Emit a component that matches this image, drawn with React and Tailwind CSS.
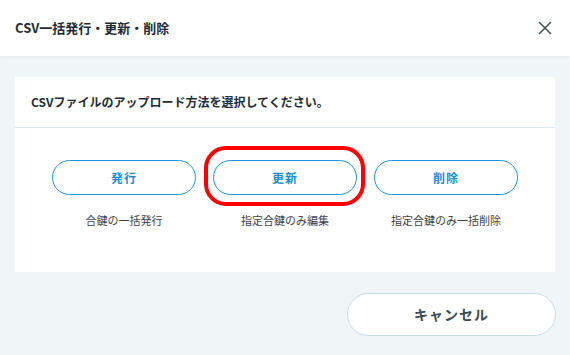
const font = { fontFamily: '"Noto Sans CJK JP", "Noto Sans", sans-serif' }

const options = [
    { label: '発行', note: '合鍵の一括発行' },
    { label: '更新', note: '指定合鍵のみ編集', active: true },
    { label: '削除', note: '指定合鍵のみ一括削除' },
]

export default function App() {
    return (
        <div className="w-[570px] h-[355px] bg-[#f0f5f8] flex flex-col overflow-hidden" style={font}>
            <div className="h-[56px] bg-white flex items-center justify-between pl-[15px] pr-[18px] shadow-[0_1px_4px_rgba(0,0,0,0.06)] shrink-0">
                <h1 className="text-[13px] font-bold text-[#1e2d35]">CSV一括発行・更新・削除</h1>
                <svg width="14" height="14" viewBox="0 0 14 14" className="text-[#3d4f58]">
                    <path d="M1.5 1.5 L12.5 12.5 M12.5 1.5 L1.5 12.5" stroke="currentColor" strokeWidth="1.5" strokeLinecap="round" />
                </svg>
            </div>
            <div className="flex-1 px-[15px] pt-[21px]">
                <div className="bg-white">
                    <div className="h-[51px] flex items-center pl-[16px] border-b border-[#dde8ee]">
                        <p className="text-[12px] font-bold text-[#1e2d35]">CSVファイルのアップロード方法を選択してください。</p>
                    </div>
                    <div className="h-[144px] flex justify-center gap-[17px] pt-[32px]">
                        {options.map(opt => (
                            <div key={opt.label} className="w-[144px] flex flex-col items-center">
                                <div className="relative w-full">
                                    {opt.active && (
                                        <div className="absolute -left-[9px] -right-[8px] -top-[14px] -bottom-[11px] border-[4px] border-[#ff0000] rounded-[22px]" />
                                    )}
                                    <button className="w-full h-[35px] rounded-full border border-[#1b93d9] text-[#1b8ed3] text-[12px] font-bold tracking-[1px] bg-white">
                                        {opt.label}
                                    </button>
                                </div>
                                <p className="mt-[17px] text-[11px] text-[#3b4447]">{opt.note}</p>
                            </div>
                        ))}
                    </div>
                </div>
                <div className="flex justify-end pt-[21px]">
                    <button className="w-[209px] h-[43px] rounded-full border border-[#c8dce6] bg-white text-[14px] font-bold text-[#3a4a51] tracking-[1px] mr-[-1px]">
                        キャンセル
                    </button>
                </div>
            </div>
        </div>
    )
}
